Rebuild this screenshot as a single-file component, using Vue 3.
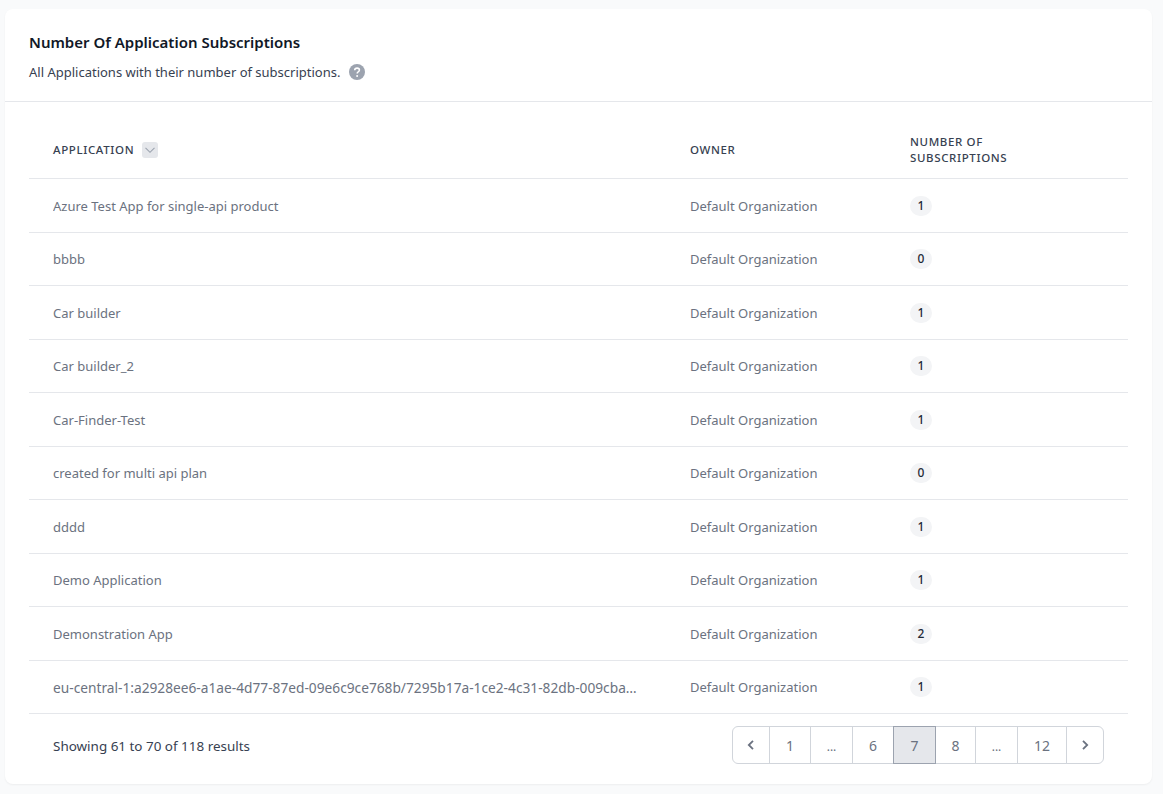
<script setup>
const rows = [
  ['Azure Test App for single-api product', 1],
  ['bbbb', 0],
  ['Car builder', 1],
  ['Car builder_2', 1],
  ['Car-Finder-Test', 1],
  ['created for multi api plan', 0],
  ['dddd', 1],
  ['Demo Application', 1],
  ['Demonstration App', 2],
  ['eu-central-1:a2928ee6-a1ae-4d77-87ed-09e6c9ce768b/7295b17a-1ce2-4c31-82db-009cba5f1c2e', 1],
]
const pages = [
  { t: '1', w: 42 }, { t: '...', w: 43, dots: true }, { t: '6', w: 42 }, { t: '7', w: 43, on: true },
  { t: '8', w: 41 }, { t: '...', w: 43, dots: true }, { t: '12', w: 50 },
]
</script>

<template>
  <main class="page">
    <section class="card">
      <header class="head">
        <h1>Number Of Application Subscriptions</h1>
        <p>All Applications with their number of subscriptions.
          <svg class="help" viewBox="0 0 16 16" width="16" height="16">
            <circle cx="8" cy="8" r="8" fill="#9ca3af" />
            <path d="M5.7 6.2c.1-1.3 1-2.1 2.4-2.1 1.3 0 2.3.8 2.3 1.9 0 .9-.5 1.4-1.2 1.9-.7.4-1 .8-1 1.5v.2" fill="none" stroke="#fff" stroke-width="1.6" />
            <circle cx="8.1" cy="11.9" r="1" fill="#fff" />
          </svg>
        </p>
      </header>
      <div class="body">
        <div class="row top">
          <div class="th">APPLICATION
            <span class="sort"><svg viewBox="0 0 16 16" width="16" height="16"><path d="M3.5 5.8 8 10.3l4.500-4.500" fill="none" stroke="#9ca3af" stroke-width="1.100" /></svg></span>
          </div>
          <div class="th">OWNER</div>
          <div class="th wrap">NUMBER OF SUBSCRIPTIONS</div>
        </div>
        <div v-for="r in rows" :key="r[0]" class="row item">
          <div class="name" :class="{ long: r[0].length > 60 }">{{ r[0] }}</div>
          <div class="owner">Default Organization</div>
          <div class="count"><span class="badge">{{ r[1] }}</span></div>
        </div>
        <footer class="foot">
          <span class="showing">Showing 61 to 70 of 118 results</span>
          <nav class="pager">
            <button class="arrow first"><svg viewBox="0 0 12 12" width="12" height="12"><path d="M8 1.800 3.800 6 8 10.200" fill="none" stroke="#6b7280" stroke-width="1.800" /></svg></button>
            <button v-for="(p, i) in pages" :key="i" :class="{ on: p.on, dots: p.dots }" :style="{ width: p.w + 'px' }">{{ p.t }}</button>
            <button class="arrow last"><svg viewBox="0 0 12 12" width="12" height="12"><path d="M4 1.800 8.200 6 4 10.200" fill="none" stroke="#6b7280" stroke-width="1.800" /></svg></button>
          </nav>
        </footer>
      </div>
    </section>
  </main>
</template>

<style>
html, body { margin: 0; background: #f9fafb; }
</style>

<style scoped>
.page {
  height: 794px;
  box-sizing: border-box;
  padding: 9px 11px 0 5px;
  font-family: "Noto Sans", "Open Sans", sans-serif;
  font-size: 13px;
  background: #f9fafb;
  overflow: hidden;
}
.card {
  height: 775px;
  background: #fff;
  border-radius: 8px;
  box-shadow: 0 1px 2px rgba(0, 0, 0, 0.05);
}
.head {
  height: 93px;
  box-sizing: border-box;
  padding: 23px 24px 0;
  border-bottom: 1px solid #e5e7eb;
}
h1 { margin: 0; font-size: 15px; line-height: 20px; font-weight: 600; color: #111827; }
p { display: flex; align-items: center; margin: 10px 0 0; line-height: 20px; color: #374151; }
.help { margin-left: 9px; }
.body { padding: 0 24px; }
.row {
  display: grid;
  grid-template-columns: 637px 220px 1fr;
  align-items: center;
  padding-left: 24px;
  border-bottom: 1px solid #e5e7eb;
  box-sizing: border-box;
}
.top { height: 77px; padding-top: 20px; }
.item { height: 53.5px; padding-top: 0.6px; }
.th {
  display: flex;
  align-items: center;
  font-size: 11.5px;
  line-height: 16px;
  font-weight: 500;
  letter-spacing: 0.63px;
  color: #374151;
}
.wrap { width: 120px; }
.sort {
  display: flex;
  width: 16px;
  height: 16px;
  margin-left: 8px;
  background: #e5e7eb;
  border-radius: 3px;
}
.name {
  width: 586px;
  overflow: hidden;
  white-space: nowrap;
  text-overflow: ellipsis;
  color: #6b7280;
}
.long { font-size: 13.72px; }
.owner { color: #6b7280; }
.count { display: flex; }
.badge {
  padding: 0 7.5px;
  line-height: 20px;
  font-size: 12px;
  font-weight: 500;
  color: #1f2937;
  background: #f3f4f6;
  border-radius: 10px;
}
.foot {
  display: flex;
  justify-content: space-between;
  align-items: center;
  height: 65px;
  padding: 0 24px 2px;
  box-sizing: border-box;
}
.showing { font-size: 13.45px; color: #374151; }
.pager { display: flex; margin-bottom: 1px; }
button {
  height: 38px;
  padding: 0;
  margin-left: -1px;
  border: 1px solid #d1d5db;
  background: #fff;
  font: inherit;
  font-size: 14px;
  color: #6b7280;
  display: flex;
  align-items: center;
  justify-content: center;
}
.dots { font-size: 12px; padding-top: 3px; }
.arrow { width: 38px; }
.first { margin-left: 0; border-radius: 6px 0 0 6px; }
.last { border-radius: 0 6px 6px 0; }
.on { background: #e5e7eb; border-color: #9ca3af; position: relative; z-index: 1; }
</style>
